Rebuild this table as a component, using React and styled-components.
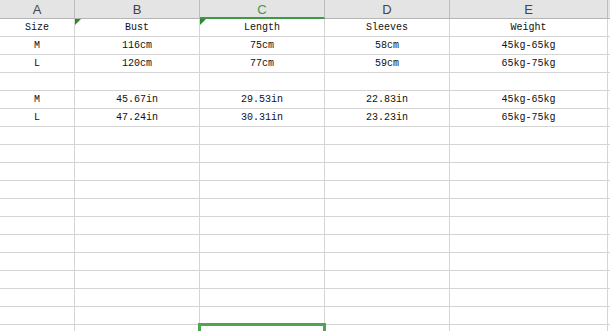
import { styled, createGlobalStyle } from "styled-components";

const GlobalStyle = createGlobalStyle`
html, body {
    margin: 0;
    padding: 0;
    background: #ffffff;
    overflow: hidden;
}
`

// last column is only a sliver at the window edge, its label stays hidden
const columns = ["A", "B", "C", "D", "E", ""]

const rows = [
    ["Size", "Bust", "Length", "Sleeves", "Weight"],
    ["M", "116cm", "75cm", "58cm", "45kg-65kg"],
    ["L", "120cm", "77cm", "59cm", "65kg-75kg"],
    ["", "", "", "", ""],
    ["M", "45.67in", "29.53in", "22.83in", "45kg-65kg"],
    ["L", "47.24in", "30.31in", "23.23in", "65kg-75kg"],
]

const TOTAL_ROWS = 18

const App = () => {
    const body = []
    for (let r = 0; r < TOTAL_ROWS; r++) {
        const data = rows[r] || []
        for (let c = 0; c < columns.length; c++) {
            body.push(
                <Cell key={r + "-" + c}>
                    {r === 0 && (c === 1 || c === 2) && <Marker />}
                    {data[c] || ""}
                    {r === TOTAL_ROWS - 1 && c === 2 && <Selection />}
                </Cell>
            )
        }
    }

    return(
        <>
        <GlobalStyle/>
        <Sheet>
            {columns.map((col, i) => (
                <HeaderCell key={i} $active={i === 2}>{col}</HeaderCell>
            ))}
            {body}
        </Sheet>
        </>
    )
}

export default App

const Sheet = styled.div`
display: grid;
grid-template-columns: 75px 125px 125px 125px 158px 60px;
grid-template-rows: 19px;
grid-auto-rows: 18px;
width: 610px;
height: 331px;
overflow: hidden;
`

const HeaderCell = styled.div`
display: flex;
align-items: center;
justify-content: center;
box-sizing: border-box;
background: #e4e4e4;
border-right: 1px solid #bcbcbc;
border-bottom: ${props => props.$active ? "2px solid #3f9a44" : "1px solid #b4b4b4"};
padding-top: ${props => props.$active ? "1px" : "0"};
font-family: "Liberation Sans", Arial, sans-serif;
font-size: 13px;
color: ${props => props.$active ? "#3f9a44" : "#444444"};
`

const Cell = styled.div`
position: relative;
display: flex;
align-items: center;
justify-content: center;
box-sizing: border-box;
border-right: 1px solid #d4d4d4;
border-bottom: 1px solid #d4d4d4;
font-family: "Liberation Mono", "Courier New", monospace;
font-size: 10px;
color: #111111;
white-space: nowrap;
`

const Marker = styled.span`
position: absolute;
top: 0;
left: 0;
width: 0;
height: 0;
border-top: 6px solid #2f8a2f;
border-right: 6px solid transparent;
`

const Selection = styled.span`
position: absolute;
top: -2px;
left: -2px;
width: 128px;
height: 20px;
box-sizing: border-box;
border: 3px solid #4ea453;
`
